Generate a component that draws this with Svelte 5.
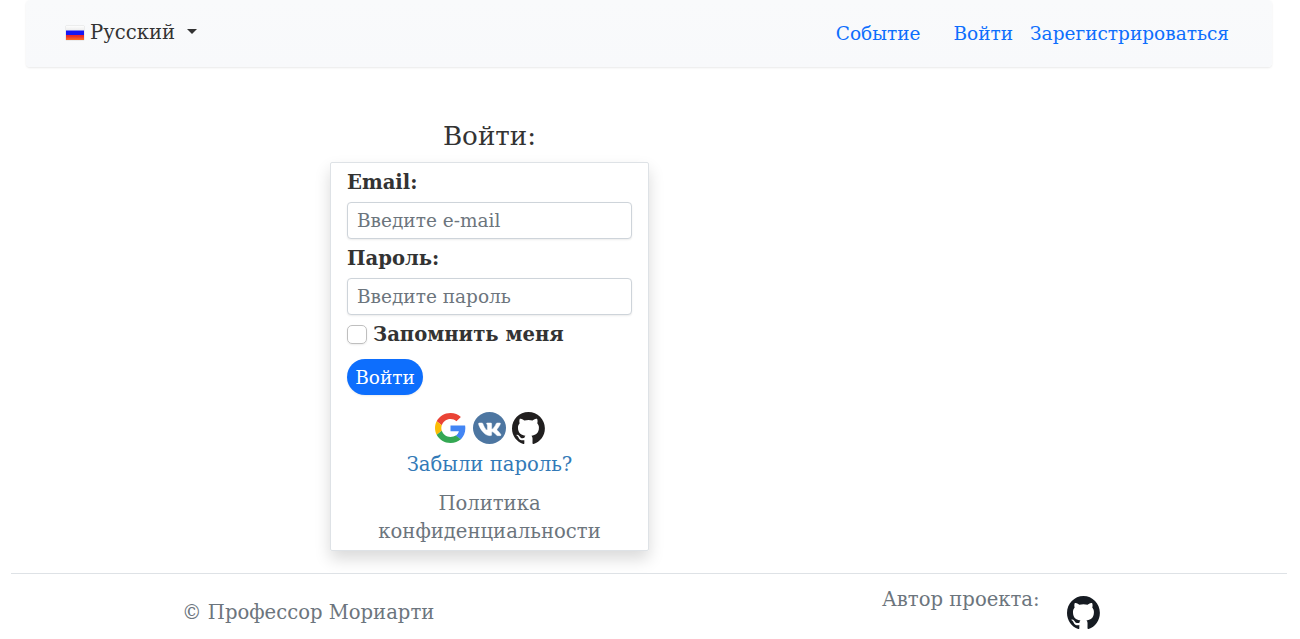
<script>
  let email = $state('');
  let password = $state('');
  let remember = $state(false);
  const octocat = 'M48.854 0C21.839 0 0 22 0 49.217c0 21.756 13.993 40.172 33.405 46.69 2.427.49 3.316-1.059 3.316-2.362 0-1.141-.08-5.052-.08-9.127-13.59 2.934-16.42-5.867-16.42-5.867-2.184-5.704-5.42-7.17-5.42-7.17-4.448-3.015.324-3.015.324-3.015 4.934.326 7.523 5.052 7.523 5.052 4.367 7.496 11.404 5.378 14.235 4.074.404-3.178 1.699-5.378 3.074-6.6-10.839-1.141-22.243-5.378-22.243-24.283 0-5.378 1.94-9.778 5.014-13.2-.485-1.222-2.184-6.275.486-13.038 0 0 4.125-1.304 13.426 5.052a46.97 46.97 0 0 1 12.214-1.63c4.125 0 8.33.571 12.213 1.63 9.302-6.356 13.427-5.052 13.427-5.052 2.67 6.763.97 11.816.485 13.038 3.155 3.422 5.015 7.822 5.015 13.2 0 18.905-11.404 23.06-22.324 24.283 1.78 1.548 3.316 4.481 3.316 9.126 0 6.6-.08 11.897-.08 13.526 0 1.304.89 2.853 3.316 2.364 19.412-6.52 33.405-24.935 33.405-46.691C97.707 22 75.788 0 48.854 0z';
</script>

<header>
  <button class="lang" type="button">
    <span class="flag"></span>
    <span class="lang-name">Русский</span>
    <span class="caret"></span>
  </button>
  <nav>
    <a class="event" href="#event">Событие</a>
    <a class="login" href="#login">Войти</a>
    <a href="#register">Зарегистрироваться</a>
  </nav>
</header>

<main>
  <h1>Войти:</h1>
  <form class="card" onsubmit={(e) => e.preventDefault()}>
    <label for="email">Email:</label>
    <input id="email" class="field" type="text" placeholder="Введите e-mail" bind:value={email} />
    <label for="password">Пароль:</label>
    <input id="password" class="field" type="password" placeholder="Введите пароль" bind:value={password} />
    <label class="check"><input type="checkbox" bind:checked={remember} /><span>Запомнить меня</span></label>
    <button class="submit" type="submit">Войти</button>
    <div class="social">
      <a href="#google" aria-label="Google">
        <svg width="31" height="30" viewBox="0 0 48 48" preserveAspectRatio="none">
          <path fill="#ea4335" d="M24 9.5c3.54 0 6.71 1.22 9.21 3.6l6.85-6.85C35.9 2.38 30.47 0 24 0 14.62 0 6.51 5.38 2.56 13.22l7.98 6.19C12.43 13.72 17.74 9.5 24 9.5z" />
          <path fill="#4285f4" d="M46.98 24.55c0-1.57-.15-3.09-.38-4.55H24v9.02h12.94c-.58 2.96-2.26 5.48-4.78 7.18l7.73 6c4.51-4.18 7.09-10.36 7.09-17.65z" />
          <path fill="#fbbc05" d="M10.53 28.59c-.48-1.45-.76-2.99-.76-4.59s.27-3.14.76-4.59l-7.98-6.19C.92 16.46 0 20.12 0 24c0 3.88.92 7.54 2.56 10.78l7.97-6.19z" />
          <path fill="#34a853" d="M24 48c6.48 0 11.93-2.13 15.89-5.81l-7.73-6c-2.15 1.45-4.92 2.3-8.16 2.3-6.26 0-11.57-4.22-13.47-9.91l-7.98 6.19C6.51 42.62 14.62 48 24 48z" />
        </svg>
      </a>
      <a href="#vk" aria-label="VK">
        <svg width="33" height="32" viewBox="0 0 33 32" preserveAspectRatio="none">
          <ellipse cx="16.5" cy="16" rx="16.5" ry="16" fill="#4d76a1" />
          <path fill="#fff" stroke="#fff" stroke-width="12" transform="translate(4.8 7.2) scale(.0415 .0395)" d="M545 117.7c3.7-12.5 0-21.7-17.8-21.7h-58.9c-15 0-21.9 7.9-25.6 16.7 0 0-30 73.1-72.4 120.5-13.7 13.7-20 18.1-27.5 18.1-3.7 0-9.4-4.4-9.4-16.9V117.7c0-15-4.2-21.7-16.6-21.7h-92.6c-9.4 0-15 7-15 13.5 0 14.2 21.2 17.5 23.4 57.5v86.8c0 19-3.4 22.5-10.9 22.5-20 0-68.6-73.4-97.4-157.4-5.8-16.3-11.5-22.9-26.6-22.9H38.8c-16.8 0-20.2 7.9-20.2 16.7 0 15.6 20 93.1 93.1 195.5C160.4 378.1 229 416 291.4 416c37.5 0 42.1-8.4 42.1-22.9 0-66.8-3.4-73.1 15.4-73.1 8.7 0 23.7 4.4 58.7 38.1 40 40 46.6 57.9 69 57.9h58.9c16.8 0 25.3-8.4 20.4-25-11.2-34.9-86.9-106.7-90.3-111.5-8.7-11.2-6.2-16.2 0-26.2.1-.1 72-101.3 79.4-135.6z" />
        </svg>
      </a>
      <a class="gh" href="#github" aria-label="GitHub">
        <svg width="33" height="32" viewBox="0 0 98 96" preserveAspectRatio="none"><path fill="#211f1f" d={octocat} /></svg>
      </a>
    </div>
    <a class="forgot" href="#forgot">Забыли пароль?</a>
    <a class="privacy" href="#privacy">Политика конфиденциальности</a>
  </form>
</main>

<footer>
  <span class="copy">© Профессор Мориарти</span>
  <span class="author">Автор проекта:</span>
  <a class="author-link" href="#author" aria-label="GitHub">
    <svg width="33" height="33" viewBox="0 0 98 96" preserveAspectRatio="none"><path fill="#161b22" d={octocat} /></svg>
  </a>
</footer>

<style>
  :global(body) {
    margin: 0;
    background: #fff;
    color: #333;
    font: 19.6px/28px "DejaVu Serif", serif;
    overflow: hidden;
  }
  a { text-decoration: none; }
  svg { display: block; }
  button { font: inherit; border: 0; }
  header {
    display: flex;
    justify-content: space-between;
    box-sizing: border-box;
    height: 67px;
    margin: 0 28px 0 26px;
    padding: 18px 43px 0 40px;
    border-radius: 4px;
    background: linear-gradient(#f9fafb, #f8f9fb);
    box-shadow: 0 1px 2px rgba(0, 0, 0, .09);
  }
  .lang {
    display: flex;
    align-items: center;
    height: 28px;
    padding: 0;
    background: none;
    color: #333;
  }
  .lang-name { padding-top: 2px; }
  .flag {
    width: 18px;
    height: 14px;
    margin: 2px 6px 0 0;
    background: linear-gradient(#fdfdfd 0, #eee 4px, #1616f5 5px 9px, #e8292b 9px 10px, #ff7020 14px);
    box-shadow: 0 0 1px #aaa;
  }
  .caret {
    margin: 0 0 2px 12px;
    border: 5px solid transparent;
    border-top-color: #333;
    border-bottom: 0;
  }
  nav { display: flex; padding-top: 2px; font-size: 18.5px; }
  nav a { color: #0d6efd; }
  .event { margin-right: 33px; }
  .login { margin-right: 17px; }
  main { width: 319px; margin: 51px 0 0 330px; }
  h1 {
    margin: 0 0 8px;
    font-size: 26.2px;
    font-weight: 400;
    line-height: 36px;
    text-align: center;
  }
  .card {
    display: flex;
    flex-direction: column;
    box-sizing: border-box;
    height: 389px;
    padding: 6px 16px 0;
    border: 1px solid #dee2e6;
    border-radius: 2px;
    box-shadow: 0 8px 16px rgba(0, 0, 0, .15);
  }
  label { font-weight: 700; }
  .field {
    box-sizing: border-box;
    width: 100%;
    height: 37px;
    margin: 5px 0 6px;
    padding: 0 9px;
    border: 1px solid #ced4da;
    border-radius: 4px;
    outline: 0;
    box-shadow: 0 1px 2px rgba(0, 0, 0, .075);
    font: 18.5px "DejaVu Serif", serif;
  }
  .field::placeholder { color: #6c757d; opacity: 1; }
  .check { display: flex; align-items: center; gap: 6px; }
  .check input {
    appearance: none;
    box-sizing: border-box;
    width: 20px;
    height: 19px;
    margin: 0 0 1px;
    border: 1px solid #bfbfbf;
    border-radius: 5px;
    box-shadow: 0 1px 2px rgba(0, 0, 0, .075);
  }
  .check input:checked { background: #0d6efd; }
  .submit {
    align-self: flex-start;
    width: 76px;
    height: 36px;
    margin-top: 10px;
    padding: 2px 0 0;
    border-radius: 18px;
    background: #0d6efd;
    color: #fff;
    font-size: 18.5px;
    box-shadow: 0 1px 2px rgba(0, 0, 0, .075);
  }
  .social {
    display: flex;
    justify-content: center;
    align-items: center;
    gap: 7px;
    height: 32px;
    margin: 17px 0 7px;
    padding-left: 1px;
  }
  .gh { margin-left: -1px; }
  .forgot { color: #337ab7; text-align: center; }
  .privacy { margin-top: 11px; color: #6c757d; text-align: center; }
  footer {
    display: flex;
    align-items: flex-start;
    height: 65px;
    margin: 22px 13px 0 11px;
    border-top: 1px solid #dee2e6;
    color: #6c757d;
  }
  .copy, .author { box-sizing: border-box; white-space: nowrap; }
  .copy { flex: 0 0 871px; padding: 25px 0 0 171px; }
  .author { width: 185px; margin-top: 12px; }
  .author-link { margin-top: 22px; }
</style>
